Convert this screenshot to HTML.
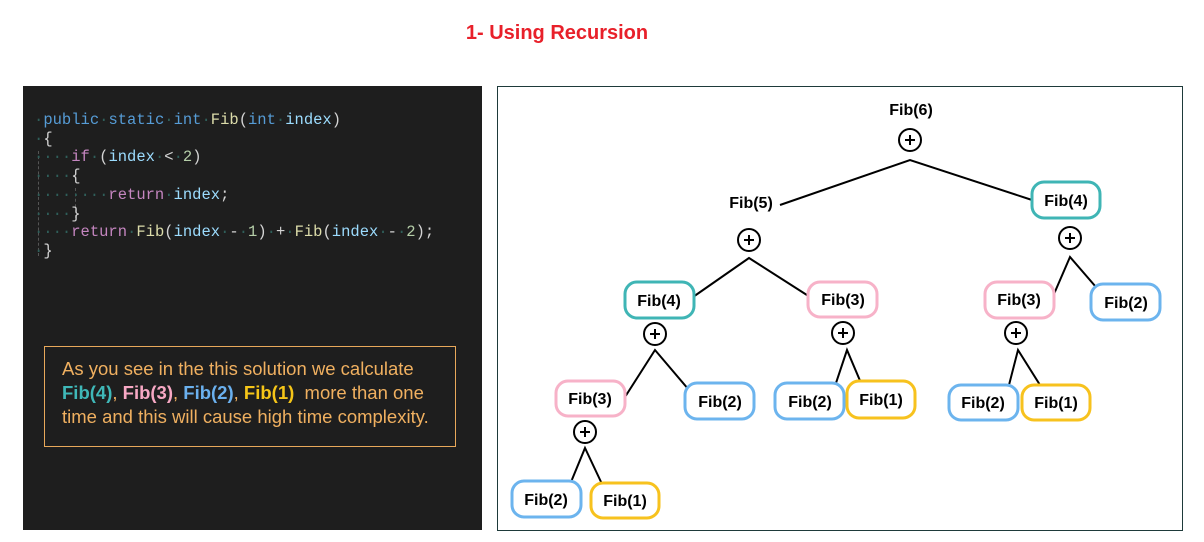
<!DOCTYPE html><html><head><style>
body{margin:0;width:1204px;height:542px;background:#fff;position:relative;overflow:hidden;font-family:"Liberation Sans",sans-serif}
.title{position:absolute;left:0;width:1114px;top:22px;text-align:center;color:#e8202a;font-weight:bold;font-size:20px}
.code{position:absolute;left:23px;top:86px;width:459px;height:444px;background:#1e1e1e}
pre{position:absolute;left:11px;top:25px;margin:0;font:15.5px/18.7px "Liberation Mono",monospace;color:#9cdcfe}
.d{color:#2f5f5a}.k{color:#569cd6}.f{color:#dcdcaa}.c{color:#c586c0}.n{color:#b5cea8}.p{color:#d4d4d4}
.g{position:absolute;left:15px;top:65px;width:0;height:105px;border-left:1px dashed #555}
.g2{position:absolute;left:52px;top:102px;width:0;height:30px;border-left:1px dashed #555}
.note{position:absolute;left:21px;top:260px;width:412px;height:101px;border:1px solid #e8a85a;box-sizing:border-box;color:#f0b060;font-size:18.5px;line-height:24px;padding:10px 0 0 17px;white-space:nowrap}
.diag{position:absolute;left:497px;top:86px;width:686px;height:445px;border:1px solid #1e3a3a;box-sizing:border-box}
</style></head><body>
<div class="title">1- Using Recursion</div>
<div class="code"><div class="g"></div><div class="g2"></div><pre><span class="d">·</span><span class="k">public</span><span class="d">·</span><span class="k">static</span><span class="d">·</span><span class="k">int</span><span class="d">·</span><span class="f">Fib</span><span class="p">(</span><span class="k">int</span><span class="d">·</span>index<span class="p">)</span>
<span class="d">·</span><span class="p">{</span>
<span class="d">····</span><span class="c">if</span><span class="d">·</span><span class="p">(</span>index<span class="d">·</span><span class="p">&lt;</span><span class="d">·</span><span class="n">2</span><span class="p">)</span>
<span class="d">····</span><span class="p">{</span>
<span class="d">········</span><span class="c">return</span><span class="d">·</span>index<span class="p">;</span>
<span class="d">····</span><span class="p">}</span>
<span class="d">····</span><span class="c">return</span><span class="d">·</span><span class="f">Fib</span><span class="p">(</span>index<span class="d">·</span><span class="p">-</span><span class="d">·</span><span class="n">1</span><span class="p">)</span><span class="d">·</span><span class="p">+</span><span class="d">·</span><span class="f">Fib</span><span class="p">(</span>index<span class="d">·</span><span class="p">-</span><span class="d">·</span><span class="n">2</span><span class="p">);</span>
<span class="d">·</span><span class="p">}</span></pre>
<div class="note">As you see in the this solution we calculate<br><b style="color:#3fb8b8">Fib(4)</b>, <b style="color:#f7a8c4">Fib(3)</b>, <b style="color:#6ab0ee">Fib(2)</b>, <b style="color:#f5c518">Fib(1)</b>&nbsp; more than one<br>time and this will cause high time complexity.</div>
</div>
<div class="diag"></div>
<svg width="1204" height="542" style="position:absolute;left:0;top:0" font-family="Liberation Sans,sans-serif" font-weight="bold" font-size="16">
<g fill="none" stroke="#000" stroke-width="2">
<path d="M780 205L910 160L1032 200"/>
<path d="M693 297L749 258L810 297"/>
<path d="M1054 294L1070 257L1102 294"/>
<path d="M625 397L655 350L689 390"/>
<path d="M836 383L847 350L861 383"/>
<path d="M1009 385L1018 350L1040 385"/>
<path d="M571 482L585 448L602 484"/>
<circle cx="910" cy="140" r="11"/><circle cx="749" cy="240" r="11"/><circle cx="1070" cy="238" r="11"/>
<circle cx="655" cy="334" r="11"/><circle cx="843" cy="333" r="11"/><circle cx="1016" cy="333" r="11"/><circle cx="585" cy="432" r="11"/>
<path d="M905 140h10M910 135v10M744 240h10M749 235v10M1065 238h10M1070 233v10M650 334h10M655 329v10M838 333h10M843 328v10M1011 333h10M1016 328v10M580 432h10M585 427v10"/>
</g>
<g fill="#fff" stroke-width="3">
<rect x="1032" y="182" width="68" height="36" rx="12" stroke="#3fb5b5"/>
<rect x="625" y="282" width="69" height="36" rx="12" stroke="#3fb5b5"/>
<rect x="808" y="282" width="69" height="35" rx="12" stroke="#f7b2c8"/>
<rect x="985" y="282" width="69" height="36" rx="12" stroke="#f7b2c8"/>
<rect x="1091" y="284" width="69" height="36" rx="12" stroke="#6cb4ee"/>
<rect x="556" y="381" width="69" height="35" rx="12" stroke="#f7b2c8"/>
<rect x="685" y="383" width="69" height="36" rx="12" stroke="#6cb4ee"/>
<rect x="775" y="383" width="69" height="36" rx="12" stroke="#6cb4ee"/>
<rect x="847" y="381" width="68" height="37" rx="12" stroke="#f7c21e"/>
<rect x="949" y="385" width="69" height="35" rx="12" stroke="#6cb4ee"/>
<rect x="1022" y="385" width="68" height="35" rx="12" stroke="#f7c21e"/>
<rect x="512" y="481" width="69" height="36" rx="12" stroke="#6cb4ee"/>
<rect x="591" y="483" width="68" height="35" rx="12" stroke="#f7c21e"/>
</g>
<g text-anchor="middle" fill="#000">
<text x="911" y="115">Fib(6)</text><text x="751" y="208">Fib(5)</text><text x="1066" y="206">Fib(4)</text>
<text x="659" y="306">Fib(4)</text><text x="843" y="305">Fib(3)</text><text x="1019" y="305">Fib(3)</text><text x="1126" y="308">Fib(2)</text>
<text x="590" y="404">Fib(3)</text><text x="720" y="407">Fib(2)</text><text x="810" y="407">Fib(2)</text><text x="881" y="405">Fib(1)</text>
<text x="983" y="408">Fib(2)</text><text x="1056" y="408">Fib(1)</text><text x="546" y="505">Fib(2)</text><text x="625" y="506">Fib(1)</text>
</g>
</svg>
</body></html>
